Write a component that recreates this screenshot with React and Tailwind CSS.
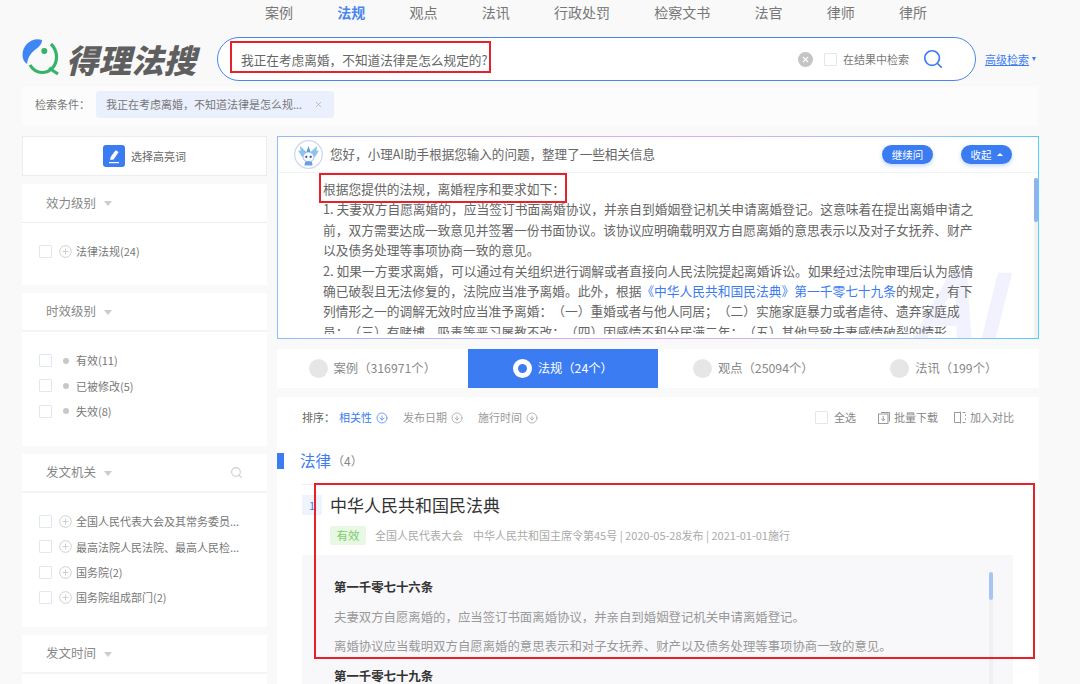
import React from "react";
import { CircleArrowDown, Search, X } from "lucide-react";

const FONT = { fontFamily: '"Noto Sans CJK SC", "Noto Sans", sans-serif' };

const NAV = ["案例", "法规", "观点", "法讯", "行政处罚", "检察文书", "法官", "律师", "律所"];

const AI_LINES = [
  "1. 夫妻双方自愿离婚的，应当签订书面离婚协议，并亲自到婚姻登记机关申请离婚登记。这意味着在提出离婚申请之",
  "前，双方需要达成一致意见并签署一份书面协议。该协议应明确载明双方自愿离婚的意思表示以及对子女抚养、财产",
  "以及债务处理等事项协商一致的意见。",
  "2. 如果一方要求离婚，可以通过有关组织进行调解或者直接向人民法院提起离婚诉讼。如果经过法院审理后认为感情",
];

const Check = () => (
  <span className="block w-[13px] h-[13px] shrink-0 border border-[#dfe7f5] bg-white rounded-[1px]" />
);

const PlusCircle = () => (
  <svg width="13" height="13" viewBox="0 0 13 13" fill="none" stroke="#cfcfcf" className="shrink-0">
    <circle cx="6.5" cy="6.5" r="5.8" />
    <path d="M6.5 3.5v6M3.5 6.5h6" />
  </svg>
);

const Caret = () => (
  <span className="ml-[8px] mt-[1px] w-0 h-0 border-x-[4px] border-x-transparent border-t-[5px] border-t-[#cccccc]" />
);

const Row = ({ dot, children }) => (
  <div className="h-[25.3px] flex items-center text-[11px] text-[#777] whitespace-nowrap">
    <Check />
    <span className="w-[13px] ml-[7px] mr-[4px] flex justify-center">
      {dot ? <span className="block w-[6px] h-[6px] rounded-full bg-[#c8c8c8]" /> : <PlusCircle />}
    </span>
    {children}
  </div>
);

const FilterBox = ({ title, bodyClass, search, thin, children }) => (
  <section className="bg-white">
    <div
      className={`h-[39px] pl-[24px] pr-[24px] flex items-center text-[12.5px] text-[#888] ${
        thin ? "border-b border-[#eeeeee]" : "border-b-2 border-[#f4f4f4]"
      }`}
    >
      {title}
      <Caret />
      {search && <Search size={13} color="#cccccc" className="ml-auto" />}
    </div>
    <div className={`pl-[17px] pt-[16px] ${bodyClass}`}>{children}</div>
  </section>
);

const Sidebar = () => (
  <aside className="w-[245px] shrink-0 flex flex-col gap-[8px]">
    <button className="h-[40px] flex items-center justify-center gap-[6px] bg-white border border-[#ececec] text-[11px] text-[#666]">
      <span className="w-[22px] h-[22px] rounded-[3px] bg-[#3b7cf2] flex items-center justify-center">
        <svg width="14" height="15" viewBox="0 0 14 15" fill="#fff">
          <path d="M8.6 1.2l3 1.9-5 7.4-3.4.6.4-3.1z" />
          <rect x="2" y="13" width="10" height="1.2" />
        </svg>
      </span>
      选择高亮词
    </button>
    <FilterBox title="效力级别" thin bodyClass="h-[62px]">
      <Row>法律法规(24)</Row>
    </FilterBox>
    <FilterBox title="时效级别" bodyClass="h-[114px]">
      <Row dot>有效(11)</Row>
      <Row dot>已被修改(5)</Row>
      <Row dot>失效(8)</Row>
    </FilterBox>
    <FilterBox title="发文机关" search bodyClass="h-[134px]">
      <Row>全国人民代表大会及其常务委员...</Row>
      <Row>最高法院人民法院、最高人民检...</Row>
      <Row>国务院(2)</Row>
      <Row>国务院组成部门(2)</Row>
    </FilterBox>
    <FilterBox title="发文时间" bodyClass="h-[60px]" />
  </aside>
);

const Avatar = () => (
  <svg width="29" height="29" viewBox="0 0 29 29" className="shrink-0">
    <circle cx="14.5" cy="14.5" r="13.8" fill="#fff" stroke="#c9d8ef" strokeWidth="1.2" />
    <path d="M13.5 13L6 6l.5 5-2.5-.5 4 6.5zM15.5 13L23 6l-.5 5 2.5-.5-4 6.5z" fill="#8cc3ee" />
    <path d="M14.5 6l2 6h-4z" fill="#4a9fe0" />
    <ellipse cx="14.5" cy="17" rx="5.5" ry="5" fill="#f6f9fd" stroke="#7f9fdb" strokeWidth=".7" />
    <circle cx="12.3" cy="16.8" r="1.1" fill="#2c4a8c" />
    <circle cx="16.7" cy="16.8" r="1.1" fill="#2c4a8c" />
    <path d="M11 22c1-1 6-1 7 0l.5 3.5h-8z" fill="#6f9ee0" />
  </svg>
);

const AiPanel = () => (
  <div className="h-[203px] p-px bg-gradient-to-r from-[#8dbcf8] via-[#e6aaf6] to-[#55cdfa]">
    <div className="relative h-full bg-white overflow-hidden">
      <div className="h-[36px] pl-[16px] pr-[26px] flex items-center border-b border-[#f3f3f3] text-[12.55px] text-[#666]">
        <Avatar />
        <span className="ml-[7px]">您好，小理AI助手根据您输入的问题，整理了一些相关信息</span>
        <button className="ml-auto w-[51px] h-[19px] rounded-full bg-[#3b7cf2] text-white text-[10.5px] shadow-[0_2px_4px_rgba(59,124,242,0.3)]">
          继续问
        </button>
        <button className="ml-[28px] w-[51px] h-[19px] rounded-full bg-[#3b7cf2] text-white text-[10.5px] flex items-center justify-center gap-[5px] shadow-[0_2px_4px_rgba(59,124,242,0.3)]">
          收起
          <span className="w-0 h-0 border-x-[3px] border-x-transparent border-b-[3px] border-b-white" />
        </button>
      </div>
      <span className="absolute left-[632px] top-[118px] text-[96px] leading-none font-bold italic text-[#f1f2fd]">
        AI
      </span>
      <div className="relative pl-[45px] pt-[6px] h-[161px] overflow-hidden text-[12.74px] leading-[20.4px] text-[#666] whitespace-nowrap">
        <p>根据您提供的法规，离婚程序和要求如下：</p>
        {AI_LINES.map((line) => (
          <p key={line}>{line}</p>
        ))}
        <p>
          确已破裂且无法修复的，法院应当准予离婚。此外，根据
          <span className="text-[#3b7cf2]">《中华人民共和国民法典》第一千零七十九条</span>
          的规定，有下
        </p>
        <p>列情形之一的调解无效时应当准予离婚：（一）重婚或者与他人同居；（二）实施家庭暴力或者虐待、遗弃家庭成</p>
        <p>员；（三）有赌博、吸毒等恶习屡教不改；（四）因感情不和分居满二年；（五）其他导致夫妻感情破裂的情形。</p>
      </div>
      {/* scrollbar */}
      <div className="absolute right-0 top-[41px] bottom-0 w-[4px] bg-[#f1f1f1]">
        <div className="h-[44px] bg-[#8fb3ee] rounded-full" />
      </div>
      {/* annotation */}
      <div className="absolute left-[41px] top-[36px] w-[248px] h-[30px] border-2 border-[#e8202a]" />
    </div>
  </div>
);

const Tab = ({ active, children }) =>
  active ? (
    <div className="flex-1 flex items-center justify-center gap-[6px] bg-[#3b7cf2] text-white text-[12.3px]">
      <span className="w-[19px] h-[19px] rounded-full border-[5px] border-white" />
      {children}
    </div>
  ) : (
    <div className="flex-1 flex items-center justify-center gap-[6px] text-[#888] text-[12.3px]">
      <span className="w-[19px] h-[19px] rounded-full bg-[#e6e6e6]" />
      {children}
    </div>
  );

const SortItem = ({ active, children }) => (
  <span className={`flex items-center gap-[4px] ${active ? "text-[#3b7cf2]" : "text-[#999]"}`}>
    {children}
    <CircleArrowDown size={12} strokeWidth={1.4} />
  </span>
);

const Results = () => (
  <div className="bg-white flex-1 min-h-0">
    <div className="h-[41px] pl-[25px] pr-[25px] flex items-center text-[11px] text-[#888]">
      <span className="w-[37px] text-[#666]">排序：</span>
      <SortItem active>相关性</SortItem>
      <span className="w-[15px]" />
      <SortItem>发布日期</SortItem>
      <span className="w-[15px]" />
      <SortItem>施行时间</SortItem>
      <span className="ml-auto flex items-center gap-[6px]">
        <Check />
        全选
      </span>
      <span className="ml-[22px] flex items-center gap-[4px]">
        <svg width="12" height="13" viewBox="0 0 12 13" fill="none" stroke="#999">
          <path d="M3 1.5h8.5v9" />
          <rect x=".5" y="3" width="9.5" height="9.5" />
          <path d="M5.2 5v4.5M3.3 8l1.9 1.7L7.1 8" />
        </svg>
        批量下载
      </span>
      <span className="ml-[16px] flex items-center gap-[4px]">
        <svg width="12" height="13" viewBox="0 0 12 13" fill="none" stroke="#999">
          <path d="M6.5 1.5H.5v10h6zM6.5 .5v12M8.5 1.5h3M8.5 11.5h3M11.5 3.5v1.500M11.5 7.5v1.500" />
        </svg>
        加入对比
      </span>
    </div>
    <div className="mt-[14px] h-[17px] flex items-center">
      <span className="w-[7px] h-[16px] bg-[#3b7cf2]" />
      <span className="ml-[16px] text-[15.5px] text-[#3b7cf2]">法律</span>
      <span className="ml-[1px] text-[12px] text-[#888]">（4）</span>
    </div>
    <div className="relative mx-[25px] mt-[15px] border-t border-[#eeeeee] pt-[10px]">
      <div className="flex items-start">
        <span className="w-[20px] h-[20px] bg-[#eef3fd] text-[#3b7cf2] text-[11px] flex items-center justify-center">
          1
        </span>
        <div className="ml-[8px]">
          <h3 className="text-[17px] leading-[20px] text-[#333]">中华人民共和国民法典</h3>
          <div className="mt-[11px] flex items-center text-[11px] text-[#aaa]">
            <span className="w-[36px] h-[19px] rounded-[2px] bg-[#e9f8e4] text-[#7ccd6a] text-[11.5px] flex items-center justify-center">
              有效
            </span>
            <span className="ml-[9px]">全国人民代表大会</span>
            <span className="ml-[10px]">中华人民共和国主席令第45号 | 2020-05-28发布 | 2021-01-01施行</span>
          </div>
        </div>
      </div>
      <div className="relative mt-[10px] h-[160px] w-[711px] bg-[#f8f8fb] pl-[32px] pt-[23px] text-[12.4px] leading-[18px] text-[#999] overflow-hidden">
        <h4 className="font-bold text-[#333]">第一千零七十六条</h4>
        <p className="mt-[12px]">夫妻双方自愿离婚的，应当签订书面离婚协议，并亲自到婚姻登记机关申请离婚登记。</p>
        <p className="mt-[11px]">离婚协议应当载明双方自愿离婚的意思表示和对子女抚养、财产以及债务处理等事项协商一致的意见。</p>
        <h4 className="mt-[12px] font-bold text-[#333]">第一千零七十九条</h4>
        {/* scrollbar */}
        <div className="absolute right-[20px] top-[17px] bottom-0 w-[4px] bg-[#f0f0f3]">
          <div className="h-[28px] bg-[#a9c4f2] rounded-full" />
        </div>
      </div>
      {/* annotation */}
      <div className="absolute left-[12px] top-[-2px] w-[721px] h-[176px] border-2 border-[#e8202a]" />
    </div>
  </div>
);

const App = () => (
  <div
    className="relative w-[1080px] h-[684px] overflow-hidden bg-[#f9f9f9] [text-spacing-trim:space-all]"
    style={FONT}
  >
    <nav className="h-[24px] pl-[265px] flex items-center gap-[44.25px] text-[14px] text-[#777]">
      {NAV.map((n) => (
        <span key={n} className={n === "法规" ? "font-bold text-[#4a86f0]" : ""}>
          {n}
        </span>
      ))}
    </nav>

    <header className="mt-[13px] h-[44px] pl-[22px] flex items-center">
      <svg width="40" height="40" viewBox="0 0 40 40" className="shrink-0 -mt-[2px]">
        <path d="M20 2C10-1 .5 7 .5 17c0 4 1.5 7 4.5 9 1-8 5-12 9-15 3-2 6-5 6-9z" fill="#3f86f5" />
        <circle cx="22.3" cy="13" r="3" fill="#35b36b" />
        <g fill="none" stroke="#35b36b" strokeWidth="3.2">
          <path d="M8 27c3 5 7 7.5 12 7.5 8 0 14.5-6.5 14.5-15.5 0-6-2.5-10-5.5-13" />
          <path d="M27 30l9 6" />
        </g>
      </svg>
      <span className="ml-[4px] w-[131px] text-[32.5px] leading-none font-black italic text-[#5f5f5f] whitespace-nowrap">
        得理法搜
      </span>
      <div className="relative ml-[20px] w-[759px] h-[44px] rounded-full border border-[#4a86f0] bg-white flex items-center pl-[23px] pr-[31px]">
        <span className="text-[12.66px] text-[#666]">我正在考虑离婚，不知道法律是怎么规定的?</span>
        <span className="ml-auto w-[15px] h-[15px] rounded-full bg-[#c4c4c4] flex items-center justify-center">
          <X size={9} color="#fff" strokeWidth={3} />
        </span>
        <span className="ml-[11px]">
          <Check />
        </span>
        <span className="ml-[6px] text-[11px] text-[#777]">在结果中检索</span>
        <Search size={22} color="#3b7cf2" strokeWidth={1.8} className="ml-[13px]" />
        {/* annotation */}
        <div className="absolute left-[12px] top-[3px] w-[261px] h-[32px] border-2 border-[#e8202a]" />
      </div>
      <a className="ml-[9px] text-[11px] text-[#3b7cf2] underline">高级检索</a>
      <span className="ml-[3px] w-0 h-0 border-x-[2.5px] border-x-transparent border-t-[4px] border-t-[#3b7cf2]" />
    </header>

    <div className="mx-[22px] mt-[6px] w-[1016px] h-[39px] bg-[#fcfcfc] flex items-start pl-[13px] pt-[4px] text-[11px] text-[#777]">
      <span className="h-[27px] flex items-center">检索条件：</span>
      <span className="ml-[6px] w-[238px] h-[27px] rounded-[3px] bg-[#eaf0fd] pl-[10px] flex items-center">
        我正在考虑离婚，不知道法律是怎么规...
        <X size={9} color="#999" strokeWidth={1.5} className="ml-[12px]" />
      </span>
    </div>

    <main className="mt-[10px] pl-[22px] flex gap-[10px]">
      <Sidebar />
      <div className="w-[762px] h-[548px] flex flex-col">
        <AiPanel />
        <div className="mt-[10px] h-[39px] bg-white flex">
          <Tab>案例（316971个）</Tab>
          <Tab active>法规（24个）</Tab>
          <Tab>观点（25094个）</Tab>
          <Tab>法讯（199个）</Tab>
        </div>
        <div className="mt-[9px] flex-1 min-h-0 flex">
          <Results />
        </div>
      </div>
    </main>
  </div>
);

export default App;
